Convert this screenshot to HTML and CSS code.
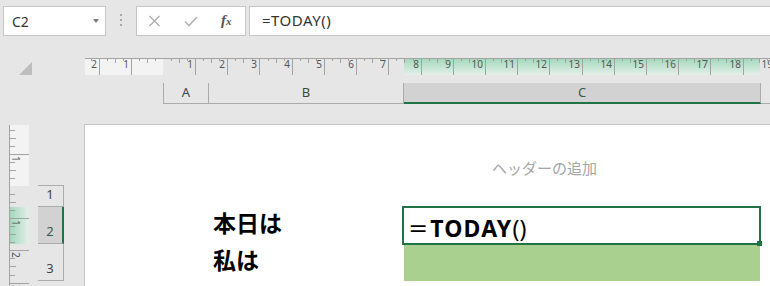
FILE: index.html
```html
<!DOCTYPE html>
<html lang="ja">
<head>
    <meta charset="UTF-8">
    <meta name="viewport" content="width=device-width, initial-scale=1.0">
    <title>Book1 - Excel</title>
    <link rel="stylesheet" href="styles.css">
</head>
<body>
    <div class="formula-bar">
        <div class="name-box">
            <span>C2</span>
            <span class="caret"></span>
        </div>
        <div class="grip"><i></i><i></i><i></i></div>
        <div class="fn-buttons">
            <svg class="btn-cancel" width="13" height="12" viewBox="0 0 13 12">
                <path d="M1.5 1 L11.5 11 M11.5 1 L1.5 11" stroke="#ababab" stroke-width="1.3" fill="none"/>
            </svg>
            <svg class="btn-enter" width="14" height="11" viewBox="0 0 14 11">
                <path d="M1 5.5 L5 9.5 L13 1" stroke="#b5b5b5" stroke-width="1.6" fill="none"/>
            </svg>
            <span class="fx"><i>f</i><sub>x</sub></span>
        </div>
        <div class="formula-input">=TODAY()</div>
    </div>

    <div class="sheet">
        <div class="corner"><span class="select-all"></span></div>

        <div class="top-area">
            <svg class="h-ruler" width="686" height="17" viewBox="0 0 686 17">
                <defs>
                    <linearGradient id="hGreen" x1="0" y1="0" x2="0" y2="1">
                        <stop offset="0" stop-color="#a1d8bb"/>
                        <stop offset="1" stop-color="#e4efe9"/>
                    </linearGradient>
                </defs>
                <rect x="1" y="0" width="78" height="17" fill="#f3f3f3"/>
                <rect x="320" y="0" width="356" height="17" fill="url(#hGreen)"/>
                <path d="M1 0.5 H686" stroke="#a3a3a3"/>
                <path stroke="#a3a3a3" d="M15.5 0v17M47.5 0v17M111.5 0v17M143.5 0v17M175.5 0v17M208.5 0v17M240.5 0v17M272.5 0v17M304.5 0v17M337.5 0v17M369.5 0v17M401.5 0v17M433.5 0v17M465.5 0v17M498.5 0v17M530.5 0v17M562.5 0v17M594.5 0v17M626.5 0v17M659.5 0v17"/>
                <path stroke="#a3a3a3" d="M31.5 1v4M63.5 1v4M95.5 1v4M127.5 1v4M159.5 1v4M192.5 1v4M224.5 1v4M256.5 1v4M288.5 1v4M320.5 1v4M353.5 1v4M385.5 1v4M417.5 1v4M449.5 1v4M481.5 1v4M514.5 1v4M546.5 1v4M578.5 1v4M610.5 1v4M642.5 1v4M675.5 1v4"/>
                <path stroke="#a3a3a3" d="M7.5 1v2M23.5 1v2M39.5 1v2M55.5 1v2M71.5 1v2M87.5 1v2M103.5 1v2M119.5 1v2M135.5 1v2M151.5 1v2M168.5 1v2M184.5 1v2M200.5 1v2M216.5 1v2M232.5 1v2M248.5 1v2M264.5 1v2M280.5 1v2M296.5 1v2M312.5 1v2M329.5 1v2M345.5 1v2M361.5 1v2M377.5 1v2M393.5 1v2M409.5 1v2M425.5 1v2M441.5 1v2M457.5 1v2M473.5 1v2M490.5 1v2M506.5 1v2M522.5 1v2M538.5 1v2M554.5 1v2M570.5 1v2M586.5 1v2M602.5 1v2M618.5 1v2M634.5 1v2M651.5 1v2M667.5 1v2M683.5 1v2"/>
                <g class="ruler-num" text-anchor="end">
                    <text x="13" y="10">2</text>
                    <text x="45" y="10">1</text>
                    <text x="109" y="10">1</text>
                    <text x="141" y="10">2</text>
                    <text x="173" y="10">3</text>
                    <text x="206" y="10">4</text>
                    <text x="238" y="10">5</text>
                    <text x="270" y="10">6</text>
                    <text x="302" y="10">7</text>
                    <text x="335" y="10">8</text>
                    <text x="367" y="10">9</text>
                    <text x="399" y="10">10</text>
                    <text x="431" y="10">11</text>
                    <text x="463" y="10">12</text>
                    <text x="496" y="10">13</text>
                    <text x="528" y="10">14</text>
                    <text x="560" y="10">15</text>
                    <text x="592" y="10">16</text>
                    <text x="624" y="10">17</text>
                    <text x="657" y="10">18</text>
                    <text x="689" y="10">19</text>
                </g>
            </svg>
            <div class="col-headers">
                <div class="col-head">A</div>
                <div class="col-head">B</div>
                <div class="col-head active">C</div>
                <div class="col-head rest"></div>
            </div>
        </div>

        <div class="side-area">
            <svg class="v-ruler" width="20" height="161" viewBox="0 0 20 161">
                <defs>
                    <linearGradient id="vGreen" x1="0" y1="0" x2="1" y2="0">
                        <stop offset="0" stop-color="#a1d8bb"/>
                        <stop offset="1" stop-color="#e4efe9"/>
                    </linearGradient>
                </defs>
                <rect x="1" y="0" width="19" height="61" fill="#f3f3f3"/>
                <rect x="1" y="82" width="19" height="37" fill="url(#vGreen)"/>
                <path d="M0.5 0 V161" stroke="#a3a3a3"/>
                <path stroke="#a3a3a3" d="M1 29.5h19M1 93.5h19M1 125.5h19M1 158.5h19"/>
                <path stroke="#a3a3a3" d="M1 5.5h5M1 13.5h6M1 21.5h5M1 37.5h5M1 45.5h6M1 53.5h5M1 69.5h5M1 77.5h6M1 85.5h5M1 101.5h5M1 109.5h6M1 117.5h5M1 133.5h5M1 141.5h6M1 150.5h5"/>
                <g class="ruler-num">
                    <text transform="translate(3 31) rotate(90)">1</text>
                    <text transform="translate(3 95) rotate(90)">1</text>
                    <text transform="translate(3 127) rotate(90)">2</text>
                    <text transform="translate(3 160) rotate(90)">3</text>
                </g>
            </svg>
            <div class="row-headers">
                <div class="row-head short">1</div>
                <div class="row-head active">2</div>
                <div class="row-head">3</div>
            </div>
        </div>

        <div class="page">
            <div class="page-header">ヘッダーの追加</div>
            <div class="cells">
                <div class="cell b2">本日は</div>
                <div class="cell c2 selected"><span class="thin eq">=</span><span class="fn-name">TODAY</span><span class="thin">()</span></div>
                <div class="cell b3">私は</div>
                <div class="cell c3 filled"></div>
            </div>
        </div>
    </div>
</body>
</html>
```

FILE: styles.css
```css
* {
    box-sizing: border-box;
}
html, body {
    margin: 0;
    padding: 0;
}
body {
    width: 770px;
    height: 286px;
    overflow: hidden;
    background: #e6e6e6;
    font-family: "Noto Sans", "Noto Sans CJK JP", sans-serif;
    color: #333;
}

/* formula bar */
.formula-bar {
    display: flex;
    height: 45px;
    padding: 6px 0 0 3px;
}
.name-box {
    width: 103px;
    height: 30px;
    background: #fff;
    border: 1px solid #c6c6c6;
    display: flex;
    align-items: center;
    justify-content: space-between;
    padding: 1px 6px 0 8px;
    font-size: 14px;
    color: #333;
}
.caret {
    width: 0;
    height: 0;
    border-left: 3.5px solid transparent;
    border-right: 3.5px solid transparent;
    border-top: 4px solid #7a7a7a;
    margin-top: -2px;
}
.grip {
    width: 30px;
    height: 30px;
    display: flex;
    flex-direction: column;
    align-items: center;
    justify-content: center;
    gap: 3px;
    padding-bottom: 3px;
}
.grip i {
    width: 2px;
    height: 2px;
    background: #a8a8a8;
}
.fn-buttons {
    width: 110px;
    height: 30px;
    background: #fff;
    border: 1px solid #c6c6c6;
    display: flex;
    align-items: center;
    padding-left: 11px;
}
.btn-enter {
    margin-left: 23px;
}
.fx {
    margin-left: 23px;
    font-family: "Liberation Serif", serif;
    font-weight: bold;
    color: #555;
    font-size: 15px;
    line-height: 1;
    margin-top: -2px;
}
.fx sub {
    font-size: 11px;
    vertical-align: baseline;
    font-style: italic;
}
.formula-input {
    flex: 1;
    height: 30px;
    margin-left: 3px;
    margin-right: -2px;
    background: #fff;
    border: 1px solid #c6c6c6;
    padding-left: 12px;
    font-size: 15px;
    line-height: 27px;
    letter-spacing: 0.5px;
    color: #333;
}

/* sheet */
.sheet {
    display: grid;
    grid-template-columns: 84px 686px;
    grid-template-rows: 79px 162px;
}
.corner {
    padding: 17px 0 0 19px;
}
.select-all {
    display: block;
    width: 13px;
    height: 13px;
    background: #bdbdbd;
    clip-path: polygon(100% 0, 100% 100%, 0 100%);
}
.top-area {
    padding-top: 13px;
}
.h-ruler,
.v-ruler {
    display: block;
}
.ruler-num {
    font-family: "Noto Sans", sans-serif;
    font-size: 10px;
    fill: #555;
}
.col-headers {
    display: grid;
    grid-template-columns: 46px 195px 357px 1fr;
    height: 21px;
    margin: 8px 0 0 79px;
}
.col-head {
    border-right: 1px solid #ababab;
    border-bottom: 1px solid #ababab;
    text-align: center;
    font-size: 13px;
    line-height: 19px;
    color: #444;
}
.col-head:first-child {
    border-left: 1px solid #ababab;
}
.col-head.active {
    background: #d2d2d2;
    border-bottom: 2px solid #217346;
    color: #3a5a4e;
}
.col-head.rest {
    border-right: none;
}

.side-area {
    display: flex;
    gap: 9px;
    padding-left: 9px;
}
.v-ruler {
    margin-top: 1px;
}
.row-headers {
    width: 26px;
    margin-top: 61px;
    border-top: 1px solid #ababab;
}
.row-head {
    height: 37px;
    border-right: 1px solid #ababab;
    border-bottom: 1px solid #ababab;
    display: flex;
    align-items: flex-end;
    justify-content: center;
    padding: 0 1px 4px 0;
    font-size: 13px;
    line-height: 16px;
    color: #444;
}
.row-head.short {
    height: 21px;
}
.row-head.active {
    background: #d2d2d2;
    border-right: 2px solid #217346;
    padding-right: 0;
    color: #3a5a4e;
}

/* page */
.page {
    background: #fff;
    border-left: 1px solid #c6c6c6;
    border-top: 1px solid #c6c6c6;
}
.page-header {
    height: 61px;
    padding: 33px 0 0 407px;
    font-family: "Noto Sans CJK JP", sans-serif;
    font-size: 15px;
    line-height: 20px;
    color: #a6a6a6;
}
.cells {
    display: grid;
    grid-template-columns: 78px 46px 194px 357px 1fr;
    grid-template-rows: 21px 37px 37px;
}
.cell {
    font-size: 23px;
    font-weight: bold;
    line-height: 26px;
    color: #000;
    white-space: nowrap;
    padding: 3px 0 0 4px;
}
.b2 {
    grid-column: 3;
    grid-row: 2;
}
.b3 {
    grid-column: 3;
    grid-row: 3;
}
.c2 {
    grid-column: 4;
    grid-row: 2;
    padding: 8px 0 0 6px;
}
.c3 {
    grid-column: 4;
    grid-row: 3;
}
.thin {
    font-weight: normal;
}
.eq {
    display: inline-block;
    transform: scaleX(1.4);
    transform-origin: left center;
    margin-right: 8px;
}
.fn-name {
    letter-spacing: 1.2px;
}
.selected {
    position: relative;
}
.selected::after {
    content: "";
    position: absolute;
    top: -1px;
    left: -1px;
    right: -1px;
    bottom: -1px;
    border: 2px solid #217346;
}
.selected::before {
    content: "";
    position: absolute;
    right: -2px;
    bottom: -2px;
    width: 5px;
    height: 5px;
    background: #217346;
    z-index: 1;
}
.filled {
    background: #a9d08e;
    margin-left: 1px;
}
```
